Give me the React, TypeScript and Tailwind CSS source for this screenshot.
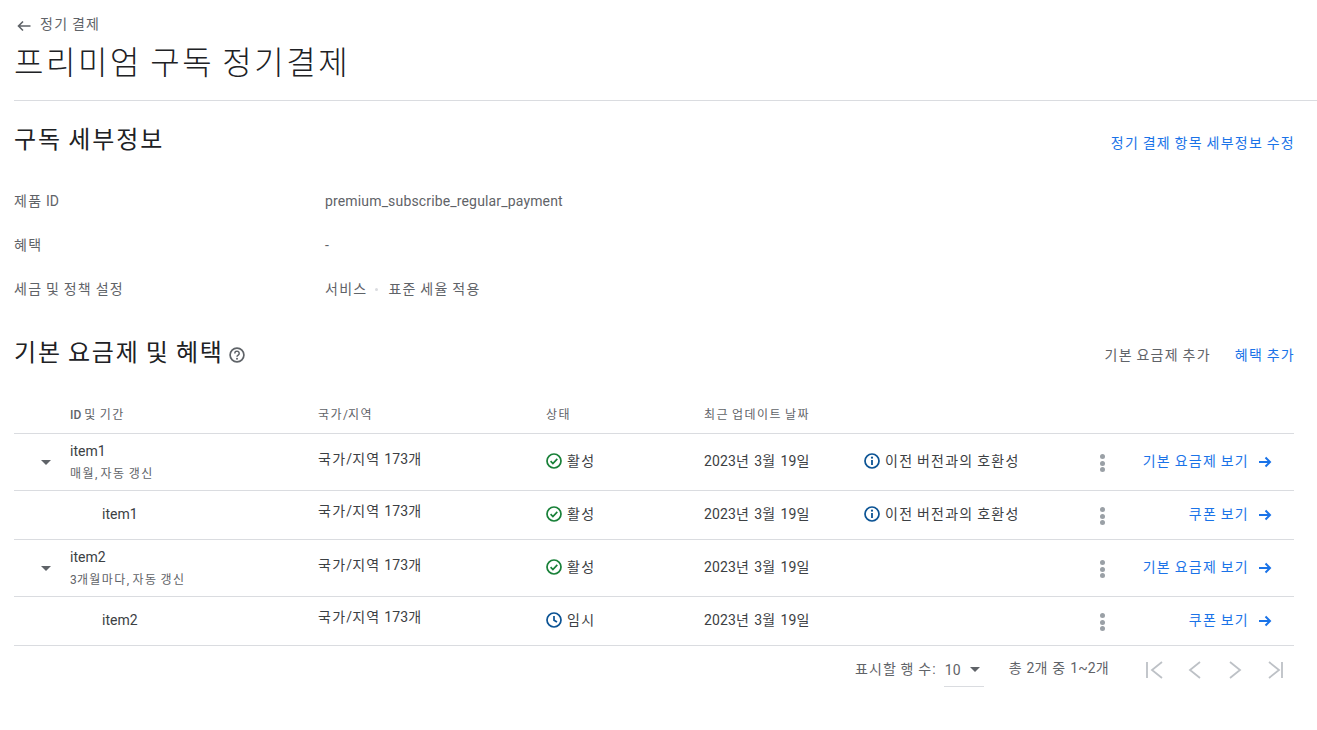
import React from "react";

const FONT = "font-['Roboto','Noto_Sans_CJK_KR',sans-serif]";
const XS = "tracking-[0.12em]";
const HEAD = "tracking-[0.075em]";

interface PlanRow {
  id: string;
  sub?: string;
  child?: boolean;
  status: "active" | "draft";
  compat?: boolean;
  link: string;
  height: string;
}

const rows: PlanRow[] = [
  { id: "item1", sub: "매월, 자동 갱신", status: "active", compat: true, link: "기본 요금제 보기", height: "h-[57px]" },
  { id: "item1", child: true, status: "active", compat: true, link: "쿠폰 보기", height: "h-[49px]" },
  { id: "item2", sub: "3개월마다, 자동 갱신", status: "active", link: "기본 요금제 보기", height: "h-[57px]" },
  { id: "item2", child: true, status: "draft", link: "쿠폰 보기", height: "h-[49px]" },
];

// hangul runs in the reference are wider than Noto's, latin only a hair wider
function K({ children, t = "tracking-[0.09em]" }: { children: string; t?: string }) {
  return (
    <>
      {children.split(/([가-힣]+)/).map((part, i) =>
        /[가-힣]/.test(part) ? (
          <span key={i} className={t}>
            {part}
          </span>
        ) : (
          <span key={i} className="tracking-[0.011em]">
            {part}
          </span>
        )
      )}
    </>
  );
}

function CheckIcon() {
  return (
    <svg width="16" height="16" viewBox="0 0 16 16" fill="none">
      <circle cx="8" cy="8" r="7" stroke="#188038" strokeWidth="1.7" />
      <path d="M4.6 8.2l2.3 2.3 4.4-4.6" stroke="#188038" strokeWidth="1.7" />
    </svg>
  );
}

function ClockIcon() {
  return (
    <svg width="16" height="16" viewBox="0 0 16 16" fill="none">
      <circle cx="8" cy="8" r="7" stroke="#0b5394" strokeWidth="1.7" />
      <path d="M8 4v4.3l3 1.8" stroke="#0b5394" strokeWidth="1.7" />
    </svg>
  );
}

function InfoIcon() {
  return (
    <svg width="16" height="16" viewBox="0 0 16 16" fill="none">
      <circle cx="8" cy="8" r="7" stroke="#0b5394" strokeWidth="1.7" />
      <path d="M8 7v5" stroke="#0b5394" strokeWidth="1.8" />
      <circle cx="8" cy="4.7" r="1.1" fill="#0b5394" />
    </svg>
  );
}

function BlueArrow() {
  return (
    <svg width="14" height="12" viewBox="0 0 14 12" fill="none" className="mt-[2px]">
      <path d="M1 6h11M7.5 1.5L12 6l-4.5 4.5" stroke="#1a73e8" strokeWidth="2" />
    </svg>
  );
}

function PageIcon({ d }: { d: string }) {
  return (
    <svg width="20" height="20" viewBox="0 0 20 20" fill="none">
      <path d={d} stroke="#bdc1c6" strokeWidth="1.8" />
    </svg>
  );
}

function Dots() {
  return (
    <div className="flex flex-col items-center gap-[1.5px] mt-[2px]">
      <span className="w-[5px] h-[5px] rounded-full bg-[#9aa0a6]" />
      <span className="w-[5px] h-[5px] rounded-full bg-[#9aa0a6]" />
      <span className="w-[5px] h-[5px] rounded-full bg-[#9aa0a6]" />
    </div>
  );
}

function Caret() {
  return <span className="w-0 h-0 border-x-[5px] border-x-transparent border-t-[5px] border-t-[#5f6368]" />;
}

function DetailRow({ label, children }: { label: string; children: React.ReactNode }) {
  return (
    <div className="flex h-11 items-center text-sm text-[#5f6368]">
      <div className="w-[311px]">
        <K>{label}</K>
      </div>
      <div>{children}</div>
    </div>
  );
}

function Row({ row }: { row: PlanRow }) {
  return (
    <div className={`flex items-center border-b border-[#dadce0] text-sm text-[#3c4043] ${row.height}`}>
      <div className="w-[56px] flex justify-center pl-2">{!row.child && <Caret />}</div>
      <div className="w-[248px]">
        {row.child ? (
          <div className="pl-8 pb-[3px]">{row.id}</div>
        ) : (
          <div className="flex flex-col gap-[7px]">
            <div className="leading-4">{row.id}</div>
            <div className="text-xs leading-4 text-[#5f6368]">
              <K t={XS}>{row.sub ?? ""}</K>
            </div>
          </div>
        )}
      </div>
      <div className={`w-[228px] ${row.child ? "mb-[8px]" : "mb-[6px]"}`}>
        <K>국가/지역 173개</K>
      </div>
      <div className="w-[158px] flex items-center gap-[5px] mb-[3px]">
        {row.status === "active" ? <CheckIcon /> : <ClockIcon />}
        <span>
          <K>{row.status === "active" ? "활성" : "임시"}</K>
        </span>
      </div>
      <div className="w-[160px] mb-[3px]">
        <K t={XS}>2023년 3월 19일</K>
      </div>
      <div className="w-[230px] flex items-center gap-[5px] mb-[3px]">
        {row.compat && (
          <>
            <InfoIcon />
            <span>
              <K>이전 버전과의 호환성</K>
            </span>
          </>
        )}
      </div>
      <div className="w-[16px] flex justify-center">
        <Dots />
      </div>
      <div className="flex-1 flex items-center justify-end gap-[9px] text-[#1a73e8] pr-[22px] mb-[3px]">
        <span>
          <K>{row.link}</K>
        </span>
        <BlueArrow />
      </div>
    </div>
  );
}

export default function App() {
  return (
    <div className={`${FONT} w-[1317px] h-[730px] overflow-hidden bg-white pl-[14px]`}>
      <div className="border-b border-[#dadce0] h-[101px] pt-[16px]">
        <div className="flex items-center gap-[9px] pl-[3px] text-sm leading-4 text-[#5f6368]">
          <svg width="14" height="12" viewBox="0 0 14 12" fill="none" className="mt-[3px]">
            <path d="M13.5 6H1.5M6 1.5L1.5 6 6 10.5" stroke="#5f6368" strokeWidth="1.6" />
          </svg>
          <span>
            <K>정기 결제</K>
          </span>
        </div>
        <h1 className="mt-[6px] text-[32px] leading-[50px] font-light text-[#202124]">
          <K t="tracking-[0.08em]">프리미엄 구독 정기결제</K>
        </h1>
      </div>

      <div className="w-[1280px]">
        <div className="flex items-center justify-between h-[78px] pb-[1px]">
          <h2 className="text-2xl font-normal text-[#202124]">
            <K t="tracking-[0.08em]">구독 세부정보</K>
          </h2>
          <span className="text-sm text-[#1a73e8] mt-[6px] -mr-[1px]">
            <K>정기 결제 항목 세부정보 수정</K>
          </span>
        </div>
        <DetailRow label="제품 ID">
          <K>premium_subscribe_regular_payment</K>
        </DetailRow>
        <DetailRow label="혜택">-</DetailRow>
        <DetailRow label="세금 및 정책 설정">
          <div className="flex items-center gap-[8px]">
            <span>
              <K>서비스</K>
            </span>
            <span className="w-[3px] h-[3px] rounded-full bg-[#dadce0] mr-[2px]" />
            <span>
              <K>표준 세율 적용</K>
            </span>
          </div>
        </DetailRow>

        <div className="flex items-center justify-between h-[64px] mt-[10px]">
          <div className="flex items-center gap-[5px]">
            <h2 className="text-2xl font-normal text-[#202124]">
              <K t={HEAD}>기본 요금제 및 혜택</K>
            </h2>
            <svg width="16" height="16" viewBox="0 0 16 16" fill="none" className="mt-1">
              <circle cx="8" cy="8" r="6.9" stroke="#5f6368" strokeWidth="1.7" />
              <path d="M5.8 6.4a2.2 2.2 0 1 1 3.4 1.8c-.8.5-1.2.9-1.2 1.6" stroke="#5f6368" strokeWidth="1.5" />
              <circle cx="8" cy="11.7" r="1" fill="#5f6368" />
            </svg>
          </div>
          <div className="flex items-center gap-[24px] text-sm mt-1 -mr-[1px]">
            <span className="text-[#5f6368]">
              <K>기본 요금제 추가</K>
            </span>
            <span className="text-[#1a73e8]">
              <K>혜택 추가</K>
            </span>
          </div>
        </div>

        <div className="flex items-center h-[50px] mt-[-1px] pt-[13px] border-b border-[#dadce0] text-xs text-[#5f6368]">
          <div className="w-[56px]" />
          <div className="w-[248px]">
            <span className="font-medium">ID</span> <K t={XS}>및 기간</K>
          </div>
          <div className="w-[228px]">
            <K t={XS}>국가/지역</K>
          </div>
          <div className="w-[158px]">
            <K t={XS}>상태</K>
          </div>
          <div>
            <K t={XS}>최근 업데이트 날짜</K>
          </div>
        </div>

        {rows.map((row, i) => (
          <Row key={i} row={row} />
        ))}

        <div className="flex justify-end h-[48px] text-sm text-[#5f6368]">
          <span className="self-center mb-[2px]">
            <K t="tracking-[0.08em]">표시할 행 수:</K>
          </span>
          <div className="ml-2 w-10 h-[41px] pt-[7px] flex items-center gap-[9px] border-b border-[#dadce0]">
            <span className="pl-[1px]">10</span>
            <Caret />
          </div>
          <span className="self-center ml-[25px] mb-[5px]">
            <K>총 2개 중 1~2개</K>
          </span>
          <div className="self-center ml-[35px] flex items-center gap-[20px] mb-[1px] mr-[9px]">
            <PageIcon d="M2 2v16M17 2L7 10l10 8" />
            <PageIcon d="M15 2L5 10l10 8" />
            <PageIcon d="M5 2l10 8-10 8" />
            <PageIcon d="M17 2v16M4 2l10 8-10 8" />
          </div>
        </div>
      </div>
    </div>
  );
}
